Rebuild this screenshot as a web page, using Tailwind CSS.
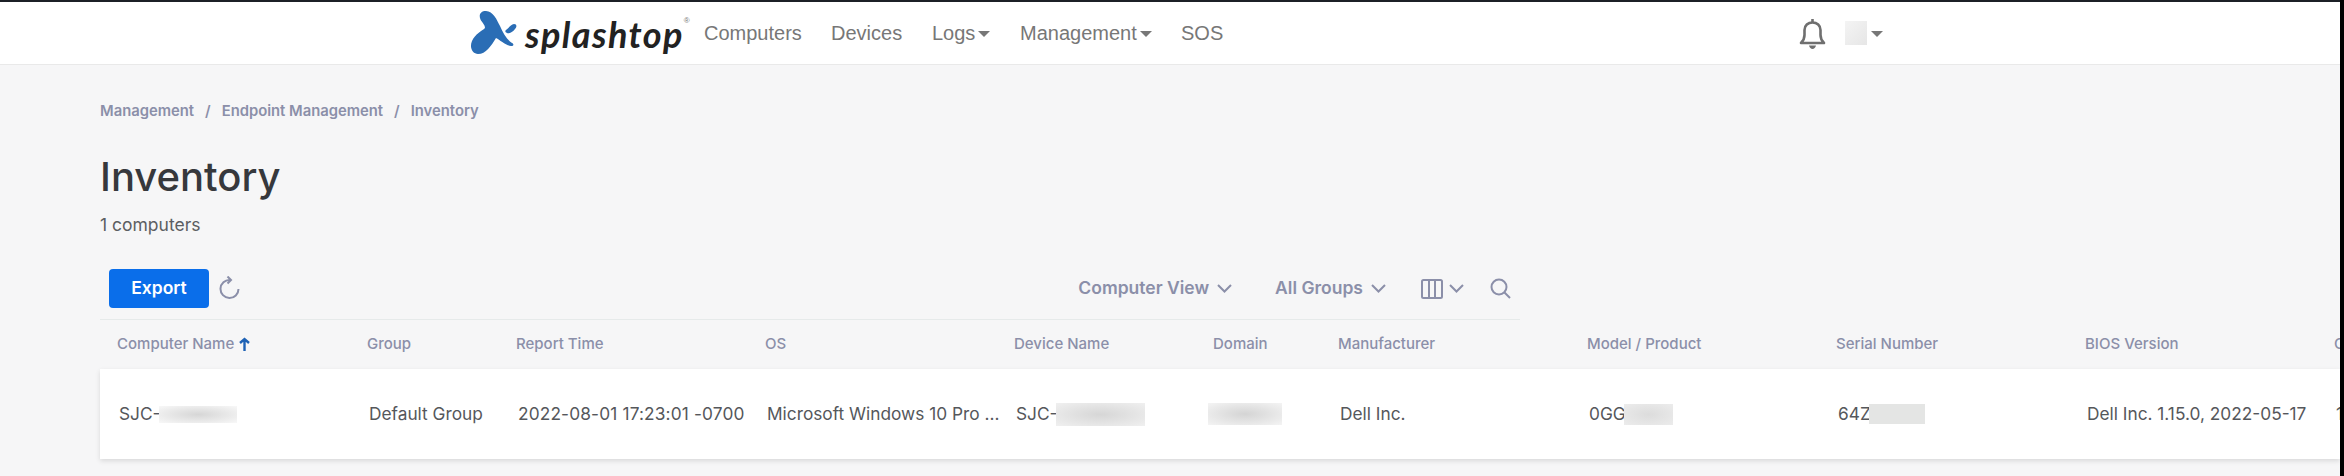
<!DOCTYPE html>
<html lang="en">

<head>
    <meta charset="UTF-8">
    <title>Inventory</title>
    <script src="https://cdn.jsdelivr.net/npm/@tailwindcss/browser@4"></script>
</head>

<body class="bg-black w-[2344px] h-[476px] overflow-hidden font-['Inter',sans-serif]">
    <div class="w-[2340px] h-[476px] overflow-hidden bg-[#f6f6f7]">
        <!-- top nav -->
        <nav class="h-[65px] bg-white border-t-[2px] border-t-[#1c2026] border-b border-b-[#e9e9e9] flex items-center pl-[470px] font-['Liberation_Sans',sans-serif] text-[20px] text-[#777]">
            <a class="flex items-center w-[234px] shrink-0 mt-[2px]">
                <svg class="w-[47px] h-[43px] shrink-0 -mt-[4px]" viewBox="0 0 47 43" fill="#2a6db5">
                    <path d="M16 0C11 0 9 3 10 7C11 11 15 13 15 17C12 20 5 23 2 30C-1 37 3 43 8 43C16 43 21 35 26 27C30 29 35 34 41 35C44 35 44 33 42 32C37 29 33 22 30 15C27 9 23 0 16 0Z" />
                    <path d="M36 19C39 17 41 13 44 13C47 13 47 16 45 18C43 21 39 23 37 22C35 21 35 20 36 19Z" />
                </svg>
                <span class="ml-[8px] font-['Lato',sans-serif] font-bold italic text-[36px] leading-none text-[#222] tracking-[1.4px]">splashtop</span>
                <span class="self-start mt-[2px] text-[8px] leading-none text-[#777]">®</span>
            </a>
            <a class="w-[127px] shrink-0">Computers</a>
            <a class="w-[101px] shrink-0">Devices</a>
            <a class="w-[88px] shrink-0 flex items-center">Logs<span class="ml-[3px] mt-[2px] border-x-[6px] border-x-transparent border-t-[6px] border-t-[#777]"></span></a>
            <a class="w-[161px] shrink-0 flex items-center">Management<span class="ml-[3px] mt-[2px] border-x-[6px] border-x-transparent border-t-[6px] border-t-[#777]"></span></a>
            <a class="w-[618px] shrink-0">SOS</a>
            <svg class="w-[27px] h-[31px] shrink-0" viewBox="0 0 27 31" fill="none" stroke="#6f6f6f" stroke-width="2.600">
                <path d="M2 25c2-2 3.500-4 3.500-8v-5c0-4.500 3.500-7.500 8-7.500s8 3 8 7.500v5c0 4 1.500 6 3.500 8z" stroke-linejoin="round" />
                <path d="M13.500 1v3" />
                <path d="M10 27.500c.5 2 2 3.500 3.500 3.500s3-1.500 3.500-3.500z" fill="#6f6f6f" stroke="none" />
            </svg>
            <div class="ml-[19px] w-[22px] h-[24px] bg-linear-to-br from-[#f4f4f4] to-[#e6e6e6]"></div>
            <span class="ml-[4px] mt-[2px] border-x-[6px] border-x-transparent border-t-[6px] border-t-[#777]"></span>
        </nav>

        <main class="pl-[100px]">
            <div class="pt-[38px] h-[54px] text-[14.800px] leading-[17px] font-semibold text-[#8b8fa9] flex gap-[11px]">
                <span>Management</span><span>/</span><span>Endpoint Management</span><span>/</span><span>Inventory</span>
            </div>
            <h1 class="mt-[34px] text-[40px] leading-[48px] font-medium text-[#36383c]">Inventory</h1>
            <p class="mt-[14px] text-[17.500px] leading-[20px] text-[#5c5e62]">1 computers</p>

            <!-- toolbar -->
            <div class="mt-[34px] w-[1420px] h-[51px] border-b border-b-[#e6eaea] pl-[9px] flex items-start">
                <button class="w-[100px] h-[39px] rounded-[4px] bg-[#0a6eea] text-white text-[17.500px] font-semibold">Export</button>
                <svg class="ml-[10px] mt-[7px] w-[21px] h-[23px]" viewBox="0 0 21 23" fill="none" stroke="#8b8fa9" stroke-width="2">
                    <path d="M11 4A9 9 0 1 0 19.500 13" />
                    <path d="M8.500 .5L12 4L8.500 7.500" />
                </svg>
                <div class="ml-auto flex items-center h-[39px] pr-[9px] text-[17.500px] font-semibold text-[#8b8fa9]">
                    <span>Computer View</span>
                    <svg class="ml-[8px] w-[15px] h-[9px]" viewBox="0 0 15 9" fill="none" stroke="#8b8fa9" stroke-width="2"><path d="M1 1l6.500 6.500L14 1" /></svg>
                    <span class="ml-[43px]">All Groups</span>
                    <svg class="ml-[8px] w-[15px] h-[9px]" viewBox="0 0 15 9" fill="none" stroke="#8b8fa9" stroke-width="2"><path d="M1 1l6.500 6.500L14 1" /></svg>
                    <svg class="ml-[35px] w-[22px] h-[20px]" viewBox="0 0 22 20" fill="none" stroke="#8b8fa9" stroke-width="2"><rect x="1" y="1" width="20" height="18" rx="1.500" /><path d="M8 1v18M14 1v18" /></svg>
                    <svg class="ml-[6px] w-[15px] h-[9px]" viewBox="0 0 15 9" fill="none" stroke="#8b8fa9" stroke-width="2"><path d="M1 1l6.500 6.500L14 1" /></svg>
                    <svg class="ml-[26px] w-[21px] h-[21px]" viewBox="0 0 21 21" fill="none" stroke="#8b8fa9" stroke-width="2"><circle cx="9" cy="9" r="7.500" /><path d="M14.500 14.500l5.500 5.500" /></svg>
                </div>
            </div>

            <!-- table header -->
            <div class="h-[49px] pl-[17px] grid grid-cols-[250px_149px_249px_249px_199px_125px_249px_249px_249px_249px_100px] items-center text-[15px] font-medium text-[#8b8fa9] whitespace-nowrap">
                <div class="flex items-center gap-[5px]">Computer Name
                    <svg class="-mt-[2px] w-[11px] h-[14px]" viewBox="0 0 11 14" fill="none" stroke="#1e62b5" stroke-width="2.400"><path d="M5.500 14V2M1 6l4.500-4 4.500 4" /></svg>
                </div>
                <div>Group</div>
                <div>Report Time</div>
                <div>OS</div>
                <div>Device Name</div>
                <div>Domain</div>
                <div>Manufacturer</div>
                <div>Model / Product</div>
                <div>Serial Number</div>
                <div>BIOS Version</div>
                <div>CPU</div>
            </div>

            <!-- table row -->
            <div class="h-[90px] pl-[19px] bg-white shadow-[0_2px_5px_rgba(0,0,0,0.12)] grid grid-cols-[250px_149px_249px_249px_199px_125px_249px_249px_249px_249px_100px] items-center text-[17.300px] text-[#55575b] whitespace-nowrap">
                <div class="flex items-center">SJC-<span class="-ml-[2px] w-[78px] h-[17px] bg-[radial-gradient(ellipse_at_center,#d6d6d6,#f8f8f8)]"></span></div>
                <div>Default Group</div>
                <div class="tracking-[0.150px]">2022-08-01 17:23:01 -0700</div>
                <div>Microsoft Windows 10 Pro ...</div>
                <div class="flex items-center">SJC-<span class="-ml-[2px] w-[89px] h-[23px] bg-[radial-gradient(ellipse_at_center,#d6d6d6,#f0f0f0)]"></span></div>
                <div><span class="block -ml-[7px] w-[74px] h-[22px] bg-[radial-gradient(ellipse_at_center,#d4d4d4,#f4f4f4)]"></span></div>
                <div>Dell Inc.</div>
                <div class="flex items-center">0GG<span class="-ml-[2px] w-[49px] h-[21px] bg-[radial-gradient(ellipse_at_center,#dcdcdc,#ececec)]"></span></div>
                <div class="flex items-center">64Z<span class="-ml-[2px] w-[56px] h-[20px] bg-[#e4e5e4]"></span></div>
                <div>Dell Inc. 1.15.0, 2022-05-17</div>
                <div>1</div>
            </div>
        </main>
    </div>
</body>

</html>
